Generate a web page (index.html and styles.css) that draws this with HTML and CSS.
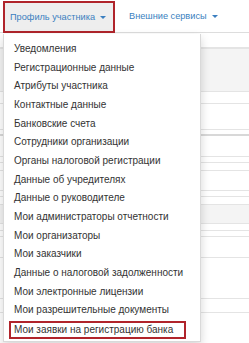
FILE: index.html
```html
<!DOCTYPE html>
<html lang="ru">
<head>
  <meta charset="UTF-8">
  <title>Профиль участника</title>
  <link rel="stylesheet" href="styles.css">
</head>
<body>
  <nav class="tabs">
    <a class="tab open" href="#">Профиль участника <span class="caret"></span></a>
    <a class="tab" href="#">Внешние сервисы <span class="caret"></span></a>
  </nav>

  <div class="content">
    <div class="row" style="height:15px"></div>
    <div class="row band" style="height:44px"></div>
    <div class="row" style="height:12px"></div>
    <div class="row" style="height:26px"></div>
    <div class="row dark" style="height:6px"></div>
    <div class="row" style="height:21px"></div>
    <div class="row" style="height:6px"></div>
    <div class="row" style="height:8px"></div>
    <div class="row" style="height:20px"></div>
    <div class="row" style="height:6px"></div>
    <div class="row plain" style="height:7px"></div>
    <div class="row band" style="height:20px"></div>
    <div class="row" style="height:7px"></div>
    <div class="row" style="height:6px"></div>
    <div class="row" style="height:21px"></div>
    <div class="row" style="height:41px"></div>
    <div class="row" style="height:14px"></div>
    <div class="row last"><span class="stub">ль &#8644;</span></div>
  </div>

  <ul class="dropdown">
    <li><a href="#">Уведомления</a></li>
    <li><a href="#">Регистрационные данные</a></li>
    <li><a href="#">Атрибуты участника</a></li>
    <li><a href="#">Контактные данные</a></li>
    <li><a href="#">Банковские счета</a></li>
    <li><a href="#">Сотрудники организации</a></li>
    <li><a href="#">Органы налоговой регистрации</a></li>
    <li><a href="#">Данные об учредителях</a></li>
    <li><a href="#">Данные о руководителе</a></li>
    <li><a href="#">Мои администраторы отчетности</a></li>
    <li><a href="#">Мои организаторы</a></li>
    <li><a href="#">Мои заказчики</a></li>
    <li><a href="#">Данные о налоговой задолженности</a></li>
    <li><a href="#">Мои электронные лицензии</a></li>
    <li><a href="#">Мои разрешительные документы</a></li>
    <li class="marked"><a href="#">Мои заявки на регистрацию банка</a></li>
  </ul>
</body>
</html>
```

FILE: styles.css
```css
body {
  margin: 0;
  font-family: 'Liberation Sans', Arial, sans-serif;
  font-size: 10px;
  color: #333;
  background: #fff;
  position: relative;
  height: 343px;
  overflow: hidden;
}
a { text-decoration: none; }

.tabs {
  display: flex;
  align-items: stretch;
  height: 33px;
  padding-left: 3px;
  border-bottom: 1px solid #ddd;
  box-sizing: border-box;
}
.tab {
  display: flex;
  align-items: center;
  gap: 5px;
  padding: 0 8px 0 5px;
  color: #3b7fc0;
  font-size: 9.2px;
  white-space: nowrap;
}
.tab.open {
  width: 112px;
  box-sizing: border-box;
  background: #eee;
  border: 2px solid #b0242b;
  margin-top: 1px;
  margin-bottom: -1px;
}
.tab + .tab { margin-left: 9px; }
.caret {
  flex: none;
  width: 0;
  height: 0;
  border-left: 3px solid transparent;
  border-right: 3px solid transparent;
  border-top: 3px solid currentColor;
  margin-top: 1px;
}

.content { display: flex; flex-direction: column; }
.row {
  border-bottom: 1px solid #e4e4e4;
  box-sizing: border-box;
}
.row.band { background: #f4f4f4; border-top: 1px solid #e4e4e4; }
.row.dark { border-bottom-color: #d8d8d8; border-bottom-width: 2px; }
.row.plain { border-bottom: 0; }
.row.last { border-bottom: 0; height: 40px; display: flex; align-items: flex-end; }
.stub {
  font-size: 10px;
  line-height: 10px;
  margin: 0 0 -6px 0;
  color: #333;
}

.dropdown {
  position: absolute;
  top: 34px;
  left: 3px;
  width: 198px;
  margin: 0;
  padding: 6px 0 2px;
  list-style: none;
  background: #fff;
  border: 1px solid rgba(0,0,0,0.15);
  border-top: 0;
  box-sizing: border-box;
  box-shadow: 0 4px 9px rgba(0,0,0,0.17);
}
.dropdown li a {
  display: block;
  padding: 0 10px;
  height: 18.67px;
  line-height: 18.67px;
  color: #333;
  white-space: nowrap;
}
.dropdown li.marked {
  margin: 1px 14px 0 5px;
  border: 2px solid #b0242b;
  height: 18px;
  box-sizing: border-box;
}
.dropdown li.marked a {
  padding: 0 3px;
  line-height: 14px;
  height: 14px;
}
```
